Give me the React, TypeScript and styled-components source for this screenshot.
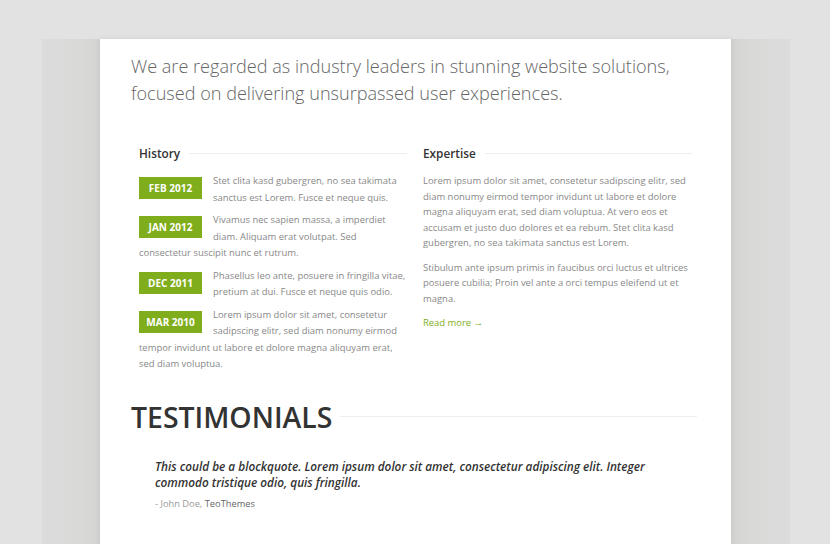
import React from "react";
import styled, { createGlobalStyle } from "styled-components";

const Global = createGlobalStyle`
  html, body { margin: 0; padding: 0; background: #e2e2e2; }
  body { font-family: "Open Sans", "Noto Sans", sans-serif; }
  * { box-sizing: border-box; }
`;

const Page = styled.div`
  padding-top: 39px;
  height: 544px;
  overflow: hidden;
`;

const Band = styled.div`
  margin: 0 40px 0 42px;
  padding: 0 59px 0 58px;
  height: 505px;
  background: linear-gradient(
    to right,
    #dcdcdc 0px,
    #d9d9d8 40px,
    #d3d3d2 58px,
    #d3d3d2 calc(100% - 59px),
    #d9d9d8 calc(100% - 40px),
    #dcdcdc 100%
  );
`;

const Panel = styled.div`
  background: #fff;
  height: 100%;
  padding: 14px 34px 0 31px;
  box-shadow: 0 0 6px rgba(0, 0, 0, 0.08);
`;

const Intro = styled.p`
  margin: 0;
  font-weight: 300;
  font-size: 18.1px;
  line-height: 27px;
  color: #666;
`;

const Columns = styled.div`
  display: grid;
  grid-template-columns: 270px 272px;
  column-gap: 14px;
  margin: 37px 0 0 8px;
`;

const Column = styled.div``;

const SectionTitle = styled.div<{ $trim?: number }>`
  display: flex;
  align-items: center;
  gap: 9px;
  margin-bottom: 11px;
  padding-right: ${(p) => p.$trim ?? 0}px;
  font-size: 11.8px;
  font-weight: 600;
  color: #333;
  line-height: 18px;
  &::after {
    content: "";
    flex: 1;
    height: 1px;
    background: #eee;
  }
`;

const Item = styled.div`
  font-size: 9.45px;
  line-height: 16.5px;
  color: #888;
  margin-bottom: 6px;
  &::after { content: ""; display: block; clear: both; }
`;

const Badge = styled.span`
  float: left;
  width: 63px;
  height: 22px;
  margin: 4px 11px 0 0;
  background: #80ad1c;
  color: #fff;
  font-weight: 700;
  font-size: 10px;
  line-height: 22px;
  text-align: center;
`;

const Para = styled.p`
  margin: 0 0 9px;
  font-size: 9.45px;
  line-height: 15.5px;
  color: #888;
`;

const ReadMore = styled.a`
  display: block;
  margin-top: 2px;
  font-size: 9.45px;
  color: #80ad1c;
  text-decoration: none;
  line-height: 16px;
`;

const BigTitle = styled.h2`
  display: flex;
  align-items: center;
  gap: 8px;
  margin: 20px 0 0;
  font-size: 28.4px;
  font-weight: 600;
  color: #333;
  line-height: 36px;
  &::after {
    content: "";
    flex: 1;
    height: 1px;
    background: #eee;
  }
`;

const Quote = styled.blockquote`
  margin: 23px 0 0 24px;
`;

const QuoteText = styled.p`
  margin: 0;
  font-style: italic;
  font-weight: 600;
  font-size: 11.8px;
  line-height: 16px;
  color: #333;
`;

const Cite = styled.div`
  margin-top: 8px;
  font-size: 9.3px;
  line-height: 12px;
  color: #999;
  span { color: #666; }
`;

const history = [
  { date: "FEB 2012", text: "Stet clita kasd gubergren, no sea takimata sanctus est Lorem. Fusce et neque quis." },
  { date: "JAN 2012", text: "Vivamus nec sapien massa, a imperdiet diam. Aliquam erat volutpat. Sed consectetur suscipit nunc et rutrum." },
  { date: "DEC 2011", text: "Phasellus leo ante, posuere in fringilla vitae, pretium at dui. Fusce et neque quis odio." },
  { date: "MAR 2010", text: "Lorem ipsum dolor sit amet, consetetur sadipscing elitr, sed diam nonumy eirmod tempor invidunt ut labore et dolore magna aliquyam erat, sed diam voluptua." },
];

export default function App() {
  return (
    <Page>
      <Global />
      <Band>
        <Panel>
          <Intro>
            We are regarded as industry leaders in stunning website solutions,
            <br />
            focused on delivering unsurpassed user experiences.
          </Intro>
          <Columns>
            <Column>
              <SectionTitle $trim={2}>History</SectionTitle>
              {history.map((h) => (
                <Item key={h.date}>
                  <Badge>{h.date}</Badge>
                  {h.text}
                </Item>
              ))}
            </Column>
            <Column>
              <SectionTitle $trim={3}>Expertise</SectionTitle>
              <Para>
                Lorem ipsum dolor sit amet, consetetur sadipscing elitr, sed diam nonumy eirmod tempor invidunt ut labore et dolore magna aliquyam erat, sed diam voluptua. At vero eos et accusam et justo duo dolores et ea rebum. Stet clita kasd gubergren, no sea takimata sanctus est Lorem.
              </Para>
              <Para>
                Stibulum ante ipsum primis in faucibus orci luctus et ultrices posuere cubilia; Proin vel ante a orci tempus eleifend ut et magna.
              </Para>
              <ReadMore href="#">Read more →</ReadMore>
            </Column>
          </Columns>
          <BigTitle>TESTIMONIALS</BigTitle>
          <Quote>
            <QuoteText>
              This could be a blockquote. Lorem ipsum dolor sit amet, consectetur adipiscing elit. Integer commodo tristique odio, quis fringilla.
            </QuoteText>
            <Cite>
              - John Doe, <span>TeoThemes</span>
            </Cite>
          </Quote>
        </Panel>
      </Band>
    </Page>
  );
}
